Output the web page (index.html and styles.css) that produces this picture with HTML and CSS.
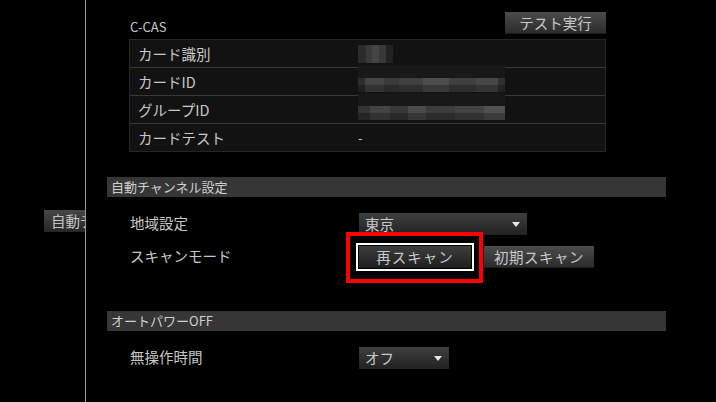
FILE: index.html
```html
<!DOCTYPE html>
<html lang="ja">
<head>
    <meta charset="UTF-8">
    <meta name="viewport" content="width=device-width, initial-scale=1.0">
    <title>設定</title>
    <link rel="stylesheet" href="styles.css">
</head>
<body>
    <div class="screen">

        <!-- Side menu -->
        <aside class="side">
            <div class="side-tab"><span class="side-text">自動チャンネル設定</span></div>
        </aside>

        <!-- Settings -->
        <main class="main">

            <!-- C-CAS card info -->
            <div class="cas">
                <div class="cas-head">
                    <span class="cas-title">C-CAS</span>
                    <button class="btn btn-test">テスト実行</button>
                </div>
                <div class="cas-table">
                    <div class="cas-row">
                        <span class="cas-label">カード識別</span>
                        <span class="cas-value"><span class="blur blur-short"></span></span>
                    </div>
                    <div class="cas-row">
                        <span class="cas-label">カードID</span>
                        <span class="cas-value"><span class="blur blur-long"></span></span>
                    </div>
                    <div class="cas-row">
                        <span class="cas-label">グループID</span>
                        <span class="cas-value"><span class="blur blur-long blur-alt"></span></span>
                    </div>
                    <div class="cas-row">
                        <span class="cas-label">カードテスト</span>
                        <span class="cas-value">-</span>
                    </div>
                </div>
            </div>

            <!-- Auto channel -->
            <section class="group group-channel">
                <h2 class="group-title">自動チャンネル設定</h2>
                <div class="row">
                    <span class="row-label">地域設定</span>
                    <div class="select select-wide">東京<span class="caret"></span></div>
                </div>
                <div class="row row-scan">
                    <span class="row-label">スキャンモード</span>
                    <div class="btns">
                        <span class="marked">
                            <button class="btn btn-scan is-focus">再スキャン</button>
                        </span>
                        <button class="btn btn-scan btn-init">初期スキャン</button>
                    </div>
                </div>
            </section>

            <!-- Auto power off -->
            <section class="group group-power">
                <h2 class="group-title">オートパワーOFF</h2>
                <div class="row">
                    <span class="row-label">無操作時間</span>
                    <div class="select select-short">オフ<span class="caret"></span></div>
                </div>
            </section>

        </main>
    </div>
</body>
</html>
```

FILE: styles.css
```css
/* Global */
body {
    margin: 0;
    padding: 0;
    background-color: #000;
    color: #c9c9c9;
    font-family: "Noto Sans CJK JP", "Noto Sans", sans-serif;
}

.screen {
    display: flex;
    width: 716px;
    height: 402px;
    overflow: hidden;
}

/* Side menu */
.side {
    width: 85px;
    flex-shrink: 0;
    border-right: 1px solid #9a9a9a;
    overflow: hidden;
}

.side-tab {
    margin: 210px 0 0 44px;
    width: 41px;
    height: 22px;
    line-height: 22px;
    overflow: hidden;
    background: linear-gradient(#464646, #262626);
}

.side-text {
    display: block;
    width: 34px;
    padding-left: 7px;
    overflow: hidden;
    white-space: nowrap;
    font-size: 14.5px;
    color: #c4c4c4;
}

/* Main */
.main {
    flex: 1;
    padding: 12px 50px 0 21px;
}

/* Buttons */
.btn {
    display: block;
    height: 22px;
    padding: 0;
    border: none;
    font-family: inherit;
    font-size: 14.5px;
    line-height: 22px;
    color: #c9c9c9;
    text-align: center;
    background: linear-gradient(#4b4b4b, #2a2a2a);
    box-shadow: inset 0 -1px 0 #1c1c1c;
}

.btn-test {
    width: 101px;
}

.btn-scan {
    width: 112px;
    letter-spacing: 1px;
}

.btn-init {
    width: 110px;
    letter-spacing: 0.5px;
}

.btn.is-focus {
    outline: 2px solid #fff;
    outline-offset: 1px;
    background: linear-gradient(#3d3d3d, #1f1f1f);
}

/* C-CAS */
.cas {
    margin-left: 22px;
    width: 477px;
}

.cas-head {
    display: flex;
    justify-content: space-between;
    align-items: flex-end;
    height: 22px;
}

.cas-title {
    padding-left: 1px;
    font-size: 13px;
    line-height: 14px;
}

.cas-table {
    margin-top: 5px;
    background-color: #121212;
    border: 1px solid #262626;
}

.cas-row {
    display: grid;
    grid-template-columns: 227px 1fr;
    align-items: center;
    height: 27px;
    border-top: 1px solid #383838;
}

.cas-row:first-child {
    border-top: none;
}

.cas-label {
    padding-left: 8px;
    font-size: 14.5px;
}

.cas-value {
    font-size: 13px;
    padding-left: 1px;
}

/* Blurred values */
.blur {
    display: block;
    background-color: #181818;
}

.blur-short {
    width: 35px;
    height: 18px;
    background: linear-gradient(90deg, #2b2b2b 0 22%, #3a3a3a 22% 40%, #444 40% 60%, #383838 60% 80%, #222 80%);
}

.blur-long {
    position: relative;
    width: 147px;
    height: 27px;
    margin-top: -6px;
}

.blur-long::after {
    content: "";
    position: absolute;
    left: 0;
    right: 0;
    top: 13px;
    height: 14px;
    background:
        linear-gradient(rgba(0, 0, 0, 0) 50%, rgba(0, 0, 0, 0.28) 50%),
        linear-gradient(90deg, #2c2c2c 0 5%, #454545 5% 18%, #3a3a3a 18% 28%, #404040 28% 44%, #4d4d4d 44% 62%, #3f3f3f 62% 80%, #474747 80% 95%, #303030 95%);
}

.blur-alt::after {
    background:
        linear-gradient(rgba(0, 0, 0, 0) 50%, rgba(0, 0, 0, 0.28) 50%),
        linear-gradient(90deg, #333 0 8%, #444 8% 22%, #383838 22% 34%, #4a4a4a 34% 46%, #3c3c3c 46% 66%, #444 66% 86%, #515151 86%);
}

/* Groups */
.group-channel {
    margin-top: 25px;
}

.group-power {
    margin-top: 43px;
}

.group-title {
    margin: 0;
    height: 20px;
    line-height: 20px;
    padding-left: 4px;
    font-size: 13px;
    font-weight: normal;
    color: #d0d0d0;
    background-color: #363636;
}

.row {
    display: flex;
    align-items: center;
    height: 22px;
    margin-top: 16px;
}

.row-scan {
    margin-top: 11px;
}

.row-label {
    width: 229px;
    padding-left: 23px;
    margin-top: -4px;
    font-size: 14.5px;
}

/* Select boxes */
.select {
    position: relative;
    height: 22px;
    line-height: 22px;
    padding-left: 6px;
    box-sizing: border-box;
    font-size: 14.5px;
    color: #c9c9c9;
    background: linear-gradient(#3e3e3e, #222);
}

.select-wide {
    width: 168px;
}

.select-short {
    width: 90px;
}

.caret {
    position: absolute;
    right: 7px;
    top: 9px;
    width: 0;
    height: 0;
    border-left: 4px solid transparent;
    border-right: 4px solid transparent;
    border-top: 5px solid #e6e6e6;
}

/* Scan buttons */
.btns {
    display: flex;
    gap: 13px;
}

.marked {
    position: relative;
}

.marked::after {
    content: "";
    position: absolute;
    top: -14px;
    bottom: -15px;
    left: -13px;
    right: -12px;
    border: 4px solid #f00;
}
```
